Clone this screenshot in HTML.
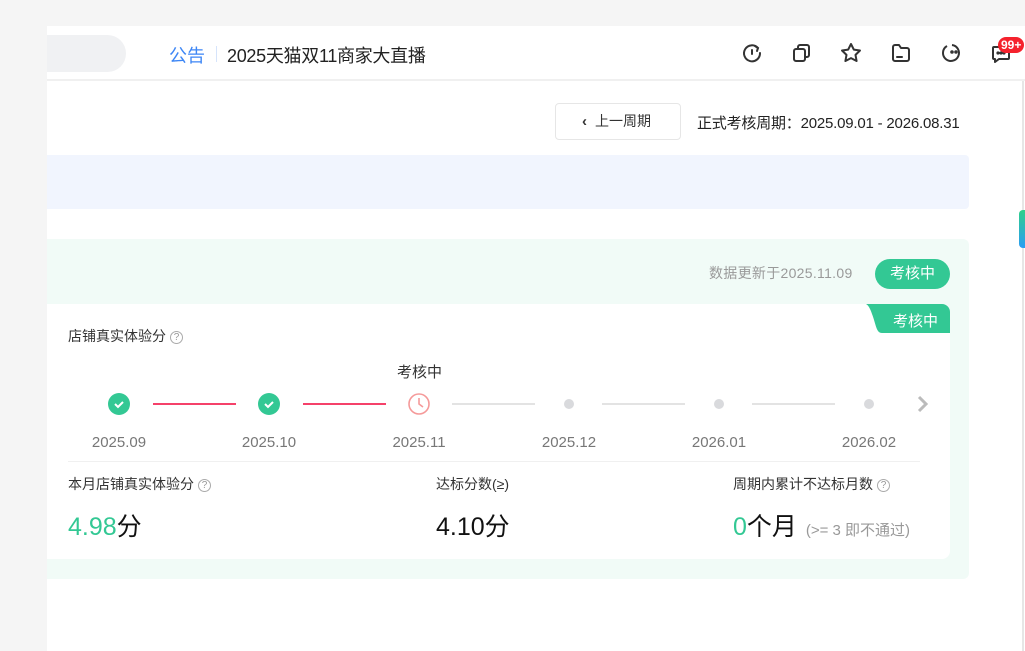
<!DOCTYPE html>
<html><head><meta charset="utf-8"><style>
*{margin:0;padding:0;box-sizing:border-box}
body{width:1025px;height:651px;overflow:hidden;background:#f5f5f5;font-family:"Liberation Sans","Noto Sans CJK SC",sans-serif;position:relative;color:#222}
.a{position:absolute}
.ic{position:absolute;top:42px;width:22px;height:22px}
.dot{position:absolute;width:10px;height:10px;border-radius:50%;background:#d9dadd;top:399px}
.chk{position:absolute;width:22px;height:22px;border-radius:50%;background:#33c894;top:393px}
.ln{position:absolute;height:2px;top:403px;width:83px}
.lab{position:absolute;top:434px;font-size:15px;color:#777;width:80px;text-align:center}
.q{display:inline-block;width:13px;height:13px;border:1px solid #aaa;border-radius:50%;font-size:10px;line-height:11px;text-align:center;color:#999;vertical-align:1px;margin-left:4px}
</style></head><body>
<div class="a" style="left:47px;top:26px;width:978px;height:625px;background:#fff"></div>
<div class="a" style="left:47px;top:79px;width:978px;height:2px;background:#f0f0f0"></div>
<div class="a" style="left:47px;top:35px;width:79px;height:37px;background:#f0f1f3;border-radius:0 19px 19px 0"></div>
<div class="a" style="left:169px;top:42px;font-size:18px;color:#3d86f5">公告</div>
<div class="a" style="left:216px;top:46px;width:1px;height:16px;background:#d6e4fb"></div>
<div class="a" style="left:227px;top:42px;font-size:18px;color:#222;letter-spacing:-0.3px">2025天猫双11商家大直播</div>
<svg class="ic" style="left:741px" viewBox="0 0 22 22" fill="none" stroke="#333" stroke-width="2" stroke-linecap="round"><path d="M17 6A8 8 0 1 0 19 11"/><path d="M14 4l3 2-1 3"/><path d="M11 8v4"/></svg>
<svg class="ic" style="left:791px" viewBox="0 0 22 22" fill="none" stroke="#333" stroke-width="2" stroke-linejoin="round"><rect x="3" y="7" width="11" height="12" rx="2"/><path d="M7 7V5a2 2 0 0 1 2-2h7a2 2 0 0 1 2 2v8a2 2 0 0 1-2 2h-2"/></svg>
<svg class="ic" style="left:840px" viewBox="0 0 22 22" fill="none" stroke="#333" stroke-width="2" stroke-linejoin="round"><path d="M11 2l2.8 5.6 6.2.9-4.5 4.4 1.1 6.1L11 16.1 5.4 19l1.1-6.1L2 8.5l6.2-.9z"/></svg>
<svg class="ic" style="left:890px" viewBox="0 0 22 22" fill="none" stroke="#333" stroke-width="2" stroke-linejoin="round"><path d="M3 5a2 2 0 0 1 2-2h4l2 3h6a2 2 0 0 1 2 2v9a2 2 0 0 1-2 2H5a2 2 0 0 1-2-2z"/><path d="M7 15h5" stroke-linecap="round"/></svg>
<svg class="ic" style="left:940px" viewBox="0 0 22 22" fill="none" stroke="#333" stroke-width="2"><path d="M7 4A8 8 0 1 0 12 3"/><circle cx="12" cy="10" r=".8" fill="#333"/><circle cx="16" cy="10" r=".8" fill="#333"/></svg>
<svg class="ic" style="left:990px" viewBox="0 0 22 22" fill="none" stroke="#333" stroke-width="2" stroke-linejoin="round"><path d="M4 5h14a1 1 0 0 1 1 1v10a1 1 0 0 1-1 1H9l-4 3v-3H4a1 1 0 0 1-1-1V6a1 1 0 0 1 1-1z"/><circle cx="8" cy="11" r=".6" fill="#333"/><circle cx="11" cy="11" r=".6" fill="#333"/><circle cx="14" cy="11" r=".6" fill="#333"/></svg>
<div class="a" style="left:998px;top:37px;height:16px;padding:0 3px;background:#f5222d;color:#fff;border-radius:8px;font-size:12px;font-weight:bold;line-height:16px">99+</div>
<div class="a" style="left:1022px;top:81px;width:2px;height:570px;background:#e6e6e6"></div>
<div class="a" style="left:1019px;top:210px;width:6px;height:38px;border-radius:4px 0 0 4px;background:linear-gradient(#2fd08a,#2a9df4)"></div>

<div class="a" style="left:555px;top:103px;width:126px;height:37px;border:1px solid #e6e6e6;border-radius:4px;font-size:14px;line-height:35px;color:#333;padding-left:26px"><b style="font-size:15px;margin-right:8px">‹</b>上一周期</div>
<div class="a" style="left:697px;top:112px;font-size:15px;color:#222;letter-spacing:-0.2px">正式考核周期：2025.09.01 - 2026.08.31</div>
<div class="a" style="left:47px;top:155px;width:922px;height:54px;background:#f1f5fe;border-radius:0 4px 4px 0"></div>
<div class="a" style="left:47px;top:239px;width:922px;height:340px;background:#f1fbf7;border-radius:0 6px 6px 0"></div>
<div class="a" style="left:709px;top:263px;font-size:14px;color:#999;letter-spacing:0.3px">数据更新于2025.11.09</div>
<div class="a" style="left:875px;top:259px;width:75px;height:30px;border-radius:15px;background:#33c894;color:#fff;font-size:15px;line-height:30px;text-align:center">考核中</div>
<div class="a" style="left:47px;top:304px;width:903px;height:255px;background:#fff;border-radius:0 8px 8px 0"></div>
<svg class="a" style="left:866px;top:304px" width="84" height="29"><path d="M0 0H76a8 8 0 0 1 8 8V29H16C10 29 10 20 6 10 4 4 2 1 0 0z" fill="#33c894"/></svg>
<div class="a" style="left:893px;top:310px;font-size:15px;color:#fff">考核中</div>
<div class="a" style="left:68px;top:326px;font-size:14px;color:#333">店铺真实体验分<span class="q">?</span></div>
<div class="a" style="left:397px;top:361px;font-size:15px;color:#333">考核中</div>
<div class="chk" style="left:108px"><svg width="22" height="22"><path d="M7 11l3 3 5-5" stroke="#fff" stroke-width="2" fill="none"/></svg></div>
<div class="ln" style="left:153px;background:#f5416a"></div>
<div class="chk" style="left:258px"><svg width="22" height="22"><path d="M7 11l3 3 5-5" stroke="#fff" stroke-width="2" fill="none"/></svg></div>
<div class="ln" style="left:303px;background:#f5416a"></div>
<svg class="a" style="left:407px;top:392px" width="24" height="24" fill="none" stroke="#f59a9a" stroke-width="1.6"><circle cx="12" cy="12" r="10"/><path d="M12 6v6l4 3"/></svg>
<div class="ln" style="left:452px;background:#e3e3e3"></div>
<div class="dot" style="left:564px"></div>
<div class="ln" style="left:602px;background:#e3e3e3"></div>
<div class="dot" style="left:714px"></div>
<div class="ln" style="left:752px;background:#e3e3e3"></div>
<div class="dot" style="left:864px"></div>
<svg class="a" style="left:916px;top:395px" width="14" height="18"><path d="M3 2l7 7-7 7" stroke="#bbb" stroke-width="3" fill="none"/></svg>
<div class="lab" style="left:79px">2025.09</div>
<div class="lab" style="left:229px">2025.10</div>
<div class="lab" style="left:379px">2025.11</div>
<div class="lab" style="left:529px">2025.12</div>
<div class="lab" style="left:679px">2026.01</div>
<div class="lab" style="left:829px">2026.02</div>
<div class="a" style="left:68px;top:461px;width:852px;height:1px;background:#f0f0f0"></div>
<div class="a" style="left:68px;top:474px;font-size:14px;color:#333">本月店铺真实体验分<span class="q">?</span></div>
<div class="a" style="left:436px;top:474px;font-size:14px;color:#333">达标分数(≥)</div>
<div class="a" style="left:733px;top:474px;font-size:14px;color:#333">周期内累计不达标月数<span class="q">?</span></div>
<div class="a" style="left:68px;top:507px;font-size:25px;color:#111"><span style="color:#33c894">4.98</span>分</div>
<div class="a" style="left:436px;top:507px;font-size:25px;color:#111">4.10分</div>
<div class="a" style="left:733px;top:507px;font-size:25px;color:#111"><span style="color:#33c894">0</span>个月 <span style="font-size:15px;color:#999;margin-left:2px">(&gt;= 3 即不通过)</span></div>
</body></html>
